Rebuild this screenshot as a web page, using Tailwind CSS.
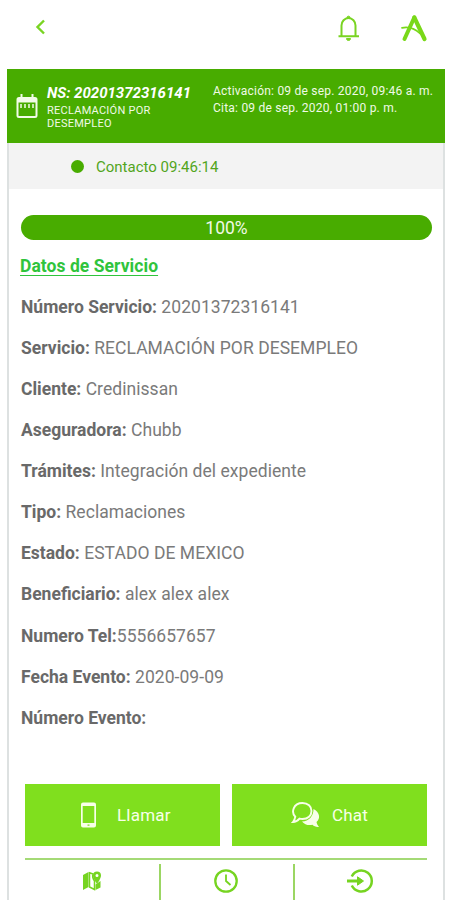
<!DOCTYPE html>
<html lang="es">
<head>
    <meta charset="UTF-8">
    <meta name="viewport" content="width=device-width, initial-scale=1.0">
    <title>Datos de Servicio</title>
    <script src="https://cdn.jsdelivr.net/npm/@tailwindcss/browser@4"></script>
</head>
<body class="bg-white font-['Roboto',sans-serif] text-[#6b6b6b]">
    <div class="w-[452px] h-[900px] overflow-hidden flex flex-col">
        <!-- Top bar -->
        <header class="h-[69px] shrink-0 flex items-start pt-[13px] pl-[33px] pr-[24px]">
            <button class="mt-[6px]">
                <svg class="w-4 h-4" viewBox="0 0 16 16" fill="none" stroke="#79d422" stroke-width="2.4"><path d="M11 1.500 4.500 8l6.500 6.500"/></svg>
            </button>
            <button class="ml-auto">
                <svg class="w-[24px] h-[30px]" viewBox="0 0 24 30" fill="none" stroke="#79d422" stroke-width="2"><path d="M4.500 22.500V12.500a7 7.500 0 0 1 14 0v10M1.500 23.200h20.500"/><path d="M9.800 4.500a1.800 2 0 0 1 3.400 0zM9.500 25.500h4a2 2 0 0 1-4 0z" fill="#79d422" stroke-width="1"/></svg>
            </button>
            <svg class="ml-[39px] w-[28px] h-[30px]" viewBox="0 0 28 30" fill="none" stroke="#79d818" stroke-linecap="round"><path d="M4.500 26 14.300 4.500" stroke-width="4"/><path d="M14.300 4.500 24.500 26" stroke-width="4.200"/><path d="M2 14.800c6-1.300 12 0 18 5.700" stroke-width="1.700"/></svg>
        </header>

        <main class="mx-[7px] flex-1 flex flex-col border-x-2 border-[#dde1e1]">
            <!-- Service header -->
            <section class="-mx-[2px] h-[74px] shrink-0 bg-[#48ac00] flex text-white">
                <svg class="mt-[25px] ml-[9px] w-[22px] h-[25px]" viewBox="0 0 22 25" fill="none" stroke="#f2fbe8" stroke-width="2"><rect x="1.500" y="4" width="19" height="19" rx="1.500"/><path d="M1.500 6.500h19" stroke-width="4"/><path d="M5.500 0v5M16.500 0v5"/><path d="M5 10v4M9 10v4M13 10v4M17 10v4" stroke-width="1.500"/></svg>
                <div class="ml-[9px] mt-[14px] w-[166px]">
                    <p class="text-[15px] leading-[20px] font-bold italic whitespace-nowrap">NS: 20201372316141</p>
                    <p class="text-[11px] leading-[13px] mt-px tracking-[0.25px] text-[#f0fae6]">RECLAMACIÓN POR<br>DESEMPLEO</p>
                </div>
                <div class="mt-[14px] text-[12px] leading-[17px] tracking-[0.22px] whitespace-nowrap text-[#f0fae6]">
                    <p>Activación: 09 de sep. 2020, 09:46 a. m.</p>
                    <p>Cita: 09 de sep. 2020, 01:00 p. m.</p>
                </div>
            </section>
            <section class="h-[46px] shrink-0 bg-[#f3f3f3] flex items-center pl-[62px] text-[15px] text-[#52a51c]">
                <span class="w-[13px] h-[13px] rounded-full bg-[#48ac00]"></span>
                <span class="ml-[12px] mt-[2px]">Contacto 09:46:14</span>
            </section>

            <!-- Progress -->
            <div class="mt-[26px] ml-[12px] mr-[11px] h-[25px] shrink-0 rounded-full bg-[#48ac00] text-[#f0fae6] text-[17.5px] leading-[26px] text-center">100%</div>

            <!-- Service data -->
            <section class="pl-[12px] text-[17.5px] leading-[41px] tracking-[0.05px] whitespace-nowrap text-[#7a7a7a] [&_b]:font-bold [&_b]:tracking-normal [&_b]:text-[#696969]">
                <h2 class="h-[41px] mt-[6px] -ml-px font-bold text-[#2fc43c] underline decoration-[1px] underline-offset-[3px]">Datos de Servicio</h2>
                <p class="h-[41px]"><b>Número Servicio:</b> 20201372316141</p>
                <p class="h-[41px]"><b>Servicio:</b> RECLAMACIÓN POR DESEMPLEO</p>
                <p class="h-[41px]"><b>Cliente:</b> Credinissan</p>
                <p class="h-[41px]"><b>Aseguradora:</b> Chubb</p>
                <p class="h-[41px]"><b>Trámites:</b> Integración del expediente</p>
                <p class="h-[41px]"><b>Tipo:</b> Reclamaciones</p>
                <p class="h-[41px]"><b>Estado:</b> ESTADO DE MEXICO</p>
                <p class="h-[42px]"><b>Beneficiario:</b> alex alex alex</p>
                <p class="h-[41px]"><b>Numero Tel:</b>5556657657</p>
                <p class="h-[41px]"><b>Fecha Evento:</b> 2020-09-09</p>
                <p class="h-[41px]"><b>Número Evento:</b></p>
            </section>

            <!-- Actions -->
            <div class="mt-auto mx-[16px] grid grid-cols-2 gap-[12px] text-[17px] tracking-[0.2px] text-[#f8ffe9]">
                <button class="h-[62px] bg-[#80df1e] flex items-center pl-[55px]">
                    <svg class="w-[17px] h-[26px]" viewBox="0 0 17 26" fill="#f8ffe9" fill-rule="evenodd"><path d="M3 .500h11a2 2 0 0 1 2 2v21a2 2 0 0 1-2 2H3a2 2 0 0 1-2-2v-21a2 2 0 0 1 2-2zM2.700 4v17h11.600V4zM7.500 22.500v1.300h2v-1.300z"/></svg>
                    <span class="ml-[20px] mt-[2px]">Llamar</span>
                </button>
                <button class="h-[62px] bg-[#80df1e] flex items-center pl-[59px]">
                    <svg class="w-[30px] h-[28px]" viewBox="0 0 30 28" fill="none"><path d="M22.500 8c6 3 7.500 9 3 13 .500 2 1.200 3.500 2.500 5-3 .300-5-.700-6.500-2.200-4 .800-8 0-10.500-3.300C18 20 22.500 15.500 22.500 8z" fill="#f8ffe9"/><path d="M11.500 2C17 2 20.500 5.500 20.500 10S17 18 11.500 18q-1.500 0-3-.400C6.500 20 4.500 21 2 21 3.300 19.500 4 17.500 4.300 15.700 0 11.500 2 2 11.500 2z" stroke="#f8ffe9" stroke-width="1.900"/></svg>
                    <span class="ml-[11px] mt-[2px]">Chat</span>
                </button>
            </div>

            <!-- Bottom tabs -->
            <nav class="mt-[12px] mx-[16px] h-[42px] shrink-0 border-t-2 border-[#a4da76] pt-[4px] grid grid-cols-[134px_134px_1fr] [&>a+a]:border-l-2 [&>a+a]:border-[#9bd663]">
                <a class="flex justify-center pt-[7px]">
                    <svg class="w-[20px] h-[20px]" viewBox="0 0 20 20" fill="#76d421"><path d="M1 4l5.500-3v15L1 19z"/><path d="M7.500 1.800 11 3c-1 3 0 5 1.500 7v8.500l-5-2.500z" fill="none" stroke="#76d421" stroke-width="1.500"/><path d="M13.500 13.500 18.500 10v6.500l-5 2.500z"/><path fill-rule="evenodd" d="M15 .500a4 4 0 0 1 4 4C19 7.500 15 13 15 13s-4-5.500-4-8.500a4 4 0 0 1 4-4zm0 2.600a1.500 1.500 0 1 0 0 3 1.500 1.500 0 0 0 0-3z"/></svg>
                </a>
                <a class="flex justify-center pt-[4px] pr-[2px]">
                    <svg class="w-[26px] h-[26px]" viewBox="0 0 26 26" fill="none" stroke="#76d421" stroke-width="2.300"><circle cx="13" cy="13" r="10.700"/><path d="M13 6.500V13l4.500 4" stroke-width="1.800"/></svg>
                </a>
                <a class="flex justify-center pt-[4px] pr-[2px]">
                    <svg class="w-[28px] h-[26px]" viewBox="0 0 28 26" fill="none" stroke="#76d421" stroke-width="2.500"><path d="M5.800 8.500A10.500 10.500 0 1 1 5.800 17.500"/><path d="M1 13h13" stroke-width="3"/><path d="m11.500 8.800 6 4.200-6 4.200z" fill="#76d421" stroke-width="1"/></svg>
                </a>
            </nav>
        </main>
    </div>
</body>
</html>
